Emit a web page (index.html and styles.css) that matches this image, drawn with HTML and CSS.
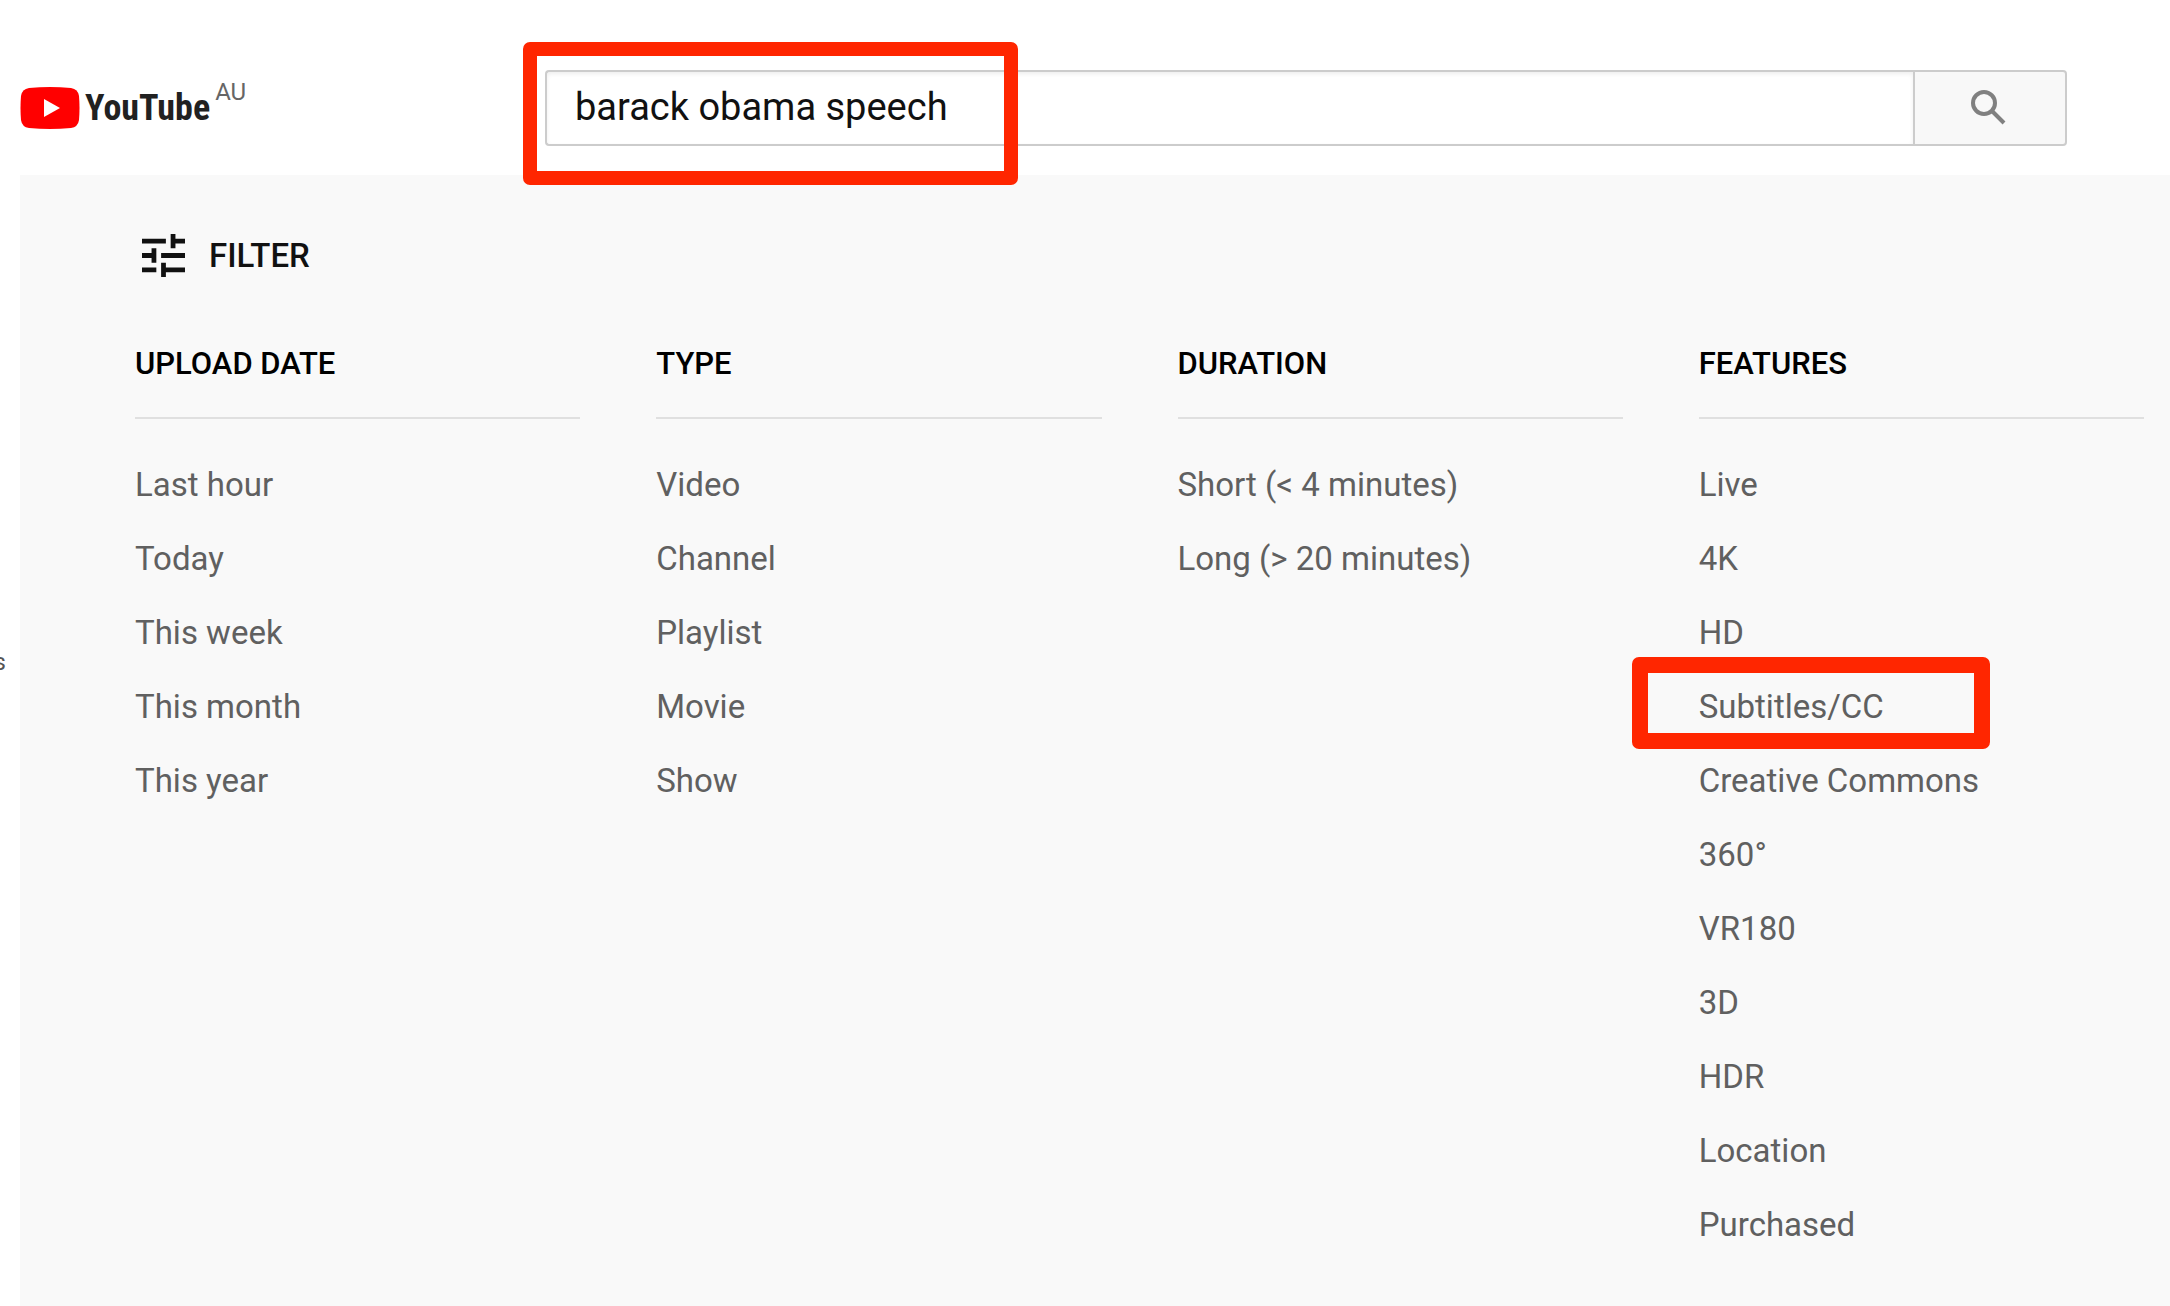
FILE: index.html
```html
<!DOCTYPE html>
<html lang="en">
<head>
<meta charset="utf-8">
<title>barack obama speech - YouTube</title>
<link rel="stylesheet" href="styles.css">
</head>
<body>
<header class="masthead">
  <a class="logo" href="#" aria-label="YouTube home">
    <svg class="logo-icon" viewBox="0 0 60 42" aria-hidden="true">
      <path fill="#f00" d="M9 1Q30-1 51 1Q58 2 59 9Q60 21 59 33Q58 40 51 41Q30 43 9 41Q2 40 1 33Q0 21 1 9Q2 2 9 1Z"/>
      <path fill="#fff" d="M24 12L40 21L24 30Z"/>
    </svg>
    <span class="logo-name">YouTube</span>
    <span class="logo-region">AU</span>
  </a>
  <form class="search" role="search">
    <input class="search-input" type="text" aria-label="Search" value="barack obama speech">
    <button class="search-button" type="button" aria-label="Search">
      <svg class="search-icon" viewBox="0 0 36 36" aria-hidden="true">
        <circle cx="14" cy="14" r="11" fill="none" stroke="#808080" stroke-width="4"/>
        <path d="M22 22L34 34" stroke="#808080" stroke-width="4"/>
      </svg>
    </button>
    <span class="highlight highlight-search"></span>
  </form>
</header>
<div class="layout">
  <aside class="guide">s</aside>
  <main class="panel">
    <button class="filter-toggle" type="button">
      <svg class="filter-icon" viewBox="3 3 18 18" aria-hidden="true">
        <path fill="#111" d="M3 17v2h6v-2H3zM3 5v2h10V5H3zm10 16v-2h8v-2h-8v-2h-2v6h2zM7 9v2H3v2h4v2h2V9H7zm14 4v-2H11v2h10zm-6-4h2V7h4V5h-4V3h-2v6z"/>
      </svg>
      FILTER
    </button>
    <div class="groups">
      <section class="group">
        <h2 class="group-title">UPLOAD DATE</h2>
        <ul class="options">
          <li><a href="#">Last hour</a></li>
          <li><a href="#">Today</a></li>
          <li><a href="#">This week</a></li>
          <li><a href="#">This month</a></li>
          <li><a href="#">This year</a></li>
        </ul>
      </section>
      <section class="group">
        <h2 class="group-title">TYPE</h2>
        <ul class="options">
          <li><a href="#">Video</a></li>
          <li><a href="#">Channel</a></li>
          <li><a href="#">Playlist</a></li>
          <li><a href="#">Movie</a></li>
          <li><a href="#">Show</a></li>
        </ul>
      </section>
      <section class="group">
        <h2 class="group-title">DURATION</h2>
        <ul class="options">
          <li><a href="#">Short (&lt; 4 minutes)</a></li>
          <li><a href="#">Long (&gt; 20 minutes)</a></li>
        </ul>
      </section>
      <section class="group">
        <h2 class="group-title">FEATURES</h2>
        <ul class="options">
          <li><a href="#">Live</a></li>
          <li><a href="#">4K</a></li>
          <li><a href="#">HD</a></li>
          <li class="marked"><a href="#">Subtitles/CC</a><span class="highlight highlight-option"></span></li>
          <li><a href="#">Creative Commons</a></li>
          <li><a href="#">360°</a></li>
          <li><a href="#">VR180</a></li>
          <li><a href="#">3D</a></li>
          <li><a href="#">HDR</a></li>
          <li><a href="#">Location</a></li>
          <li><a href="#">Purchased</a></li>
        </ul>
      </section>
    </div>
  </main>
</div>
</body>
</html>
```
FILE: styles.css
```css
* {
  box-sizing: border-box;
}

body {
  margin: 0;
  min-height: 100vh;
  display: flex;
  flex-direction: column;
  background: #fff;
  color: #111;
  font-family: Roboto, "Liberation Sans", sans-serif;
}

button {
  font: inherit;
  color: inherit;
  cursor: pointer;
}

a {
  color: inherit;
  text-decoration: none;
}

.masthead {
  display: grid;
  grid-template-columns: 525px 1fr;
  padding: 70px 103px 29px 20px;
}

.logo {
  display: flex;
  align-items: center;
  gap: 5px;
  height: 76px;
}

.logo-icon {
  width: 60px;
  height: 42px;
}

.logo-name {
  color: #212121;
  font-family: "Liberation Sans Narrow", "Roboto Condensed", "Liberation Sans", sans-serif;
  font-size: 36px;
  font-weight: 700;
}

.logo-region {
  align-self: flex-start;
  margin-top: 8px;
  color: #666;
  font-size: 24px;
  line-height: 28px;
}

.search {
  position: relative;
  display: flex;
  height: 76px;
}

.search-input {
  flex: 1;
  min-width: 0;
  padding: 0 28px 2px;
  border: 2px solid #ccc;
  border-right: 0;
  border-radius: 4px 0 0 4px;
  background: #fff;
  box-shadow: inset 0 2px 4px #eee;
  color: #111;
  font: inherit;
  font-size: 38px;
  outline: 0;
}

.search-button {
  display: flex;
  align-items: center;
  justify-content: center;
  width: 154px;
  padding: 0 4px 2px 0;
  border: 2px solid #ccc;
  border-radius: 0 4px 4px 0;
  background: #f8f8f8;
}

.search-icon {
  width: 36px;
  height: 36px;
}

.highlight {
  position: absolute;
  border: 14px solid #ff2600;
  border-radius: 7px;
  pointer-events: none;
}

.highlight-search {
  top: -28px;
  left: -22px;
  width: 495px;
  height: 143px;
}

.highlight-option {
  top: -13px;
  left: -67px;
  width: 358px;
  height: 92px;
  border-width: 16px;
}

.layout {
  flex: 1;
  display: grid;
  grid-template-columns: 20px 1fr;
}

.guide {
  padding: 473px 14px 0 0;
  direction: rtl;
  overflow: hidden;
  color: #555;
  font-size: 24px;
  line-height: 28px;
}

.panel {
  padding: 55px 26px 42px 115px;
  background: #f9f9f9;
}

.filter-toggle {
  display: flex;
  align-items: center;
  gap: 24px;
  height: 50px;
  padding: 0 7px;
  border: 0;
  background: none;
  font-size: 33px;
  font-weight: 500;
}

.filter-icon {
  width: 43px;
  height: 43px;
}

.groups {
  display: grid;
  grid-template-columns: repeat(4, 1fr);
  gap: 76px;
  margin-top: 63px;
}

.group-title {
  margin: 0;
  padding-bottom: 32px;
  border-bottom: 2px solid #e0e0e0;
  color: #000;
  font-size: 31px;
  font-weight: 500;
  line-height: 42px;
}

.options {
  margin: 29px 0 0;
  padding: 0;
  list-style: none;
  color: #606060;
  font-size: 33px;
  line-height: 74px;
}

.marked {
  position: relative;
}
```
